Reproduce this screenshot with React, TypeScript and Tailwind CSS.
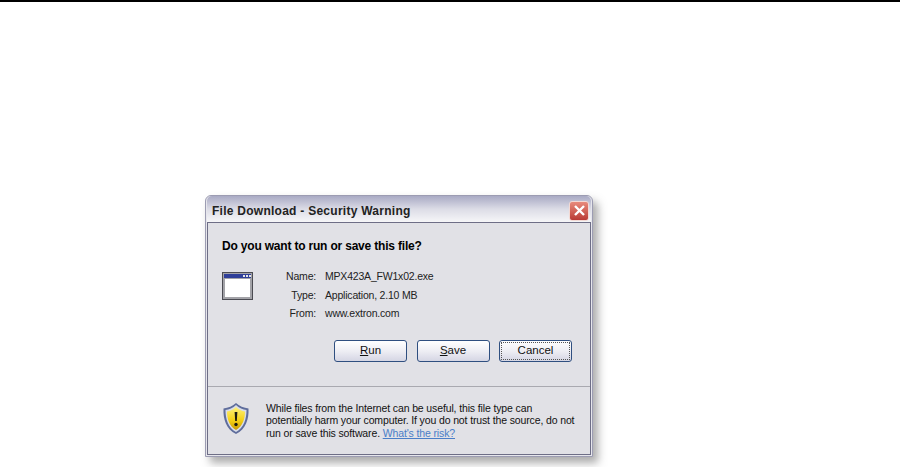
const FONT = "font-['Liberation_Sans',Arial,sans-serif]";

function WindowIcon() {
  return (
    <svg width="32" height="30" viewBox="0 0 32 30" className="shrink-0">
      <rect x="0.5" y="0.5" width="30" height="27" fill="#a3a3a8" stroke="#4b4b52" />
      <rect x="2" y="2" width="27" height="4" fill="#2f3f99" />
      <rect x="21" y="3" width="2" height="2" fill="#e6e6e6" />
      <rect x="24" y="3" width="2" height="2" fill="#e6e6e6" />
      <rect x="27" y="3" width="2" height="2" fill="#e6e6e6" />
      <rect x="3" y="7" width="25" height="18" fill="#fff" />
    </svg>
  );
}

function ShieldIcon() {
  return (
    <svg width="28" height="33" viewBox="0 0 28 33" className="shrink-0">
      <defs>
        <linearGradient id="shieldFill" x1="0" y1="0" x2="0" y2="1">
          <stop offset="0" stopColor="#fff27a" />
          <stop offset="0.6" stopColor="#f4cf12" />
          <stop offset="1" stopColor="#c89a08" />
        </linearGradient>
      </defs>
      <path d="M14 1 C11 4 6 6 1.5 6.5 C1 17 4 27 14 32 C24 27 27 17 26.5 6.5 C22 6 17 4 14 1Z" fill="#5f6d9c" />
      <path d="M14 3 C11 6 7 7.5 3.5 8 C3.5 17 6 25.5 14 30 C22 25.5 24.5 17 24.5 8 C21 7.5 17 6 14 3Z" fill="#d9dde8" />
      <path d="M14 5 C11.5 7.5 8 9 5 9.5 C5 17 7.5 24.5 14 28 C20.5 24.5 23 17 23 9.5 C20 9 16.5 7.5 14 5Z" fill="url(#shieldFill)" />
      <path d="M12.6 10 H15.4 L14.8 19 H13.2 Z" fill="#1c1a10" />
      <circle cx="14" cy="22.5" r="1.7" fill="#1c1a10" />
    </svg>
  );
}

function CloseButton() {
  return (
    <div className="flex h-[20px] w-[20px] items-center justify-center rounded-[3px] border border-[#f3d9d4] bg-gradient-to-b from-[#e88a7c] to-[#b93a35]">
      <svg width="13" height="13" viewBox="0 0 13 13">
        <path d="M2 2 L11 11 M11 2 L2 11" stroke="#fff" strokeWidth="2.4" />
      </svg>
    </div>
  );
}

function DialogButton({ label, hotkey, focused }: { label: string; hotkey?: boolean; focused?: boolean }) {
  return (
    <button
      type="button"
      className="flex h-[22px] w-[73px] items-center justify-center rounded-[3px] border border-[#2f4f80] bg-gradient-to-b from-white via-[#eeeef4] to-[#d5d6e4] p-px text-[11.5px] text-[#111]"
    >
      <span className={`flex h-full w-full items-center justify-center ${focused ? 'border border-dotted border-[#555]' : ''}`}>
        {hotkey ? <span className="underline">{label[0]}</span> : label[0]}
        {label.slice(1)}
      </span>
    </button>
  );
}

function InfoRow({ label, value }: { label: string; value: string }) {
  return (
    <div className="flex h-[18.5px] items-center text-[10.5px] tracking-[-0.2px] text-[#222]">
      <span className="w-[38px] text-right">{label}</span>
      <span className="ml-[9px]">{value}</span>
    </div>
  );
}

export default function App() {
  return (
    <div className={`h-[467px] w-[900px] overflow-hidden bg-white ${FONT}`}>
      <div className="h-[2px] bg-black" />
      <div className="ml-[205px] mt-[193px] w-[388px] rounded-t-[6px] border border-[#9c9cb2] bg-[#e6e6ec] px-px pb-px shadow-[5px_6px_8px_rgba(90,90,90,0.5)]">
        <div className="flex h-[26px] items-center justify-between rounded-t-[5px] bg-gradient-to-b from-[#a9aac4] via-[#dcdce6] to-[#f6f6f8] pl-[5px] pr-[2px] pt-[3px]">
          <span className="text-[12px] font-bold tracking-[0.26px] text-[#222]">File Download - Security Warning</span>
          <CloseButton />
        </div>
        <div className="border border-[#6e6e86] bg-[#e1e1e6]">
          <div className="px-[14px] pt-[16px]">
            <h1 className="text-[12px] font-bold leading-[14px] tracking-[-0.19px] text-black">Do you want to run or save this file?</h1>
            <div className="mt-[18px] flex">
              <div className="mt-[1px]"><WindowIcon /></div>
              <div className="ml-[24px] mt-[-3px]">
                <InfoRow label="Name:" value="MPX423A_FW1x02.exe" />
                <InfoRow label="Type:" value="Application, 2.10 MB" />
                <InfoRow label="From:" value="www.extron.com" />
              </div>
            </div>
            <div className="mt-[16px] flex justify-end gap-[9.5px] pr-[4px]">
              <DialogButton label="Run" hotkey />
              <DialogButton label="Save" hotkey />
              <DialogButton label="Cancel" focused />
            </div>
          </div>
          <div className="mt-[24px] flex border-t border-[#a9a9b0] pb-[15px] pl-[14px] pt-[15px]">
            <ShieldIcon />
            <p className="ml-[16px] text-[10.5px] leading-[12.6px] tracking-[-0.13px] text-[#111]">
              While files from the Internet can be useful, this file type can
              <br />
              potentially harm your computer. If you do not trust the source, do not
              <br />
              run or save this software. <span className="text-[#4a7ec8] underline">What's the risk?</span>
            </p>
          </div>
        </div>
      </div>
    </div>
  );
}
